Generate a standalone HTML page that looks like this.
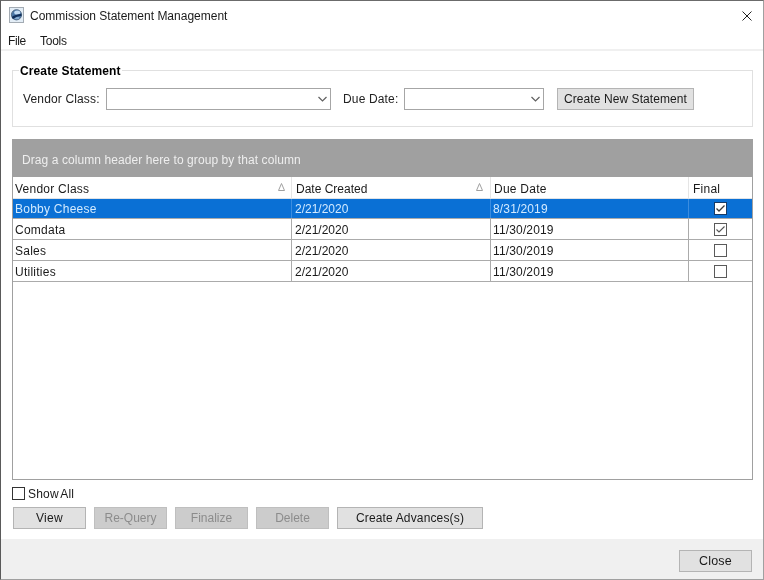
<!DOCTYPE html>
<html><head><meta charset="utf-8">
<style>
html,body{margin:0;padding:0;width:764px;height:580px;overflow:hidden;background:#fff;}
body{position:relative;font-family:"Liberation Sans",sans-serif;font-size:12px;color:#1a1a1a;}
.a{position:absolute;}
.t{position:absolute;white-space:nowrap;line-height:14px;font-size:12px;}
.win{position:absolute;left:0;top:0;width:764px;height:580px;box-sizing:border-box;border-top:1px solid #6b6b6b;border-left:1px solid #5a5a5a;border-right:1px solid #a0a0a0;border-bottom:1px solid #a0a0a0;}
.combo{position:absolute;box-sizing:border-box;border:1px solid #a6a6a6;background:#fff;height:22px;}
.btn{position:absolute;box-sizing:border-box;border:1px solid #b4b4b4;background:#e1e1e1;height:22px;text-align:center;line-height:20px;white-space:nowrap;}
.dis{background:#cccccc;border-color:#bfbfbf;color:#8c8c8c;}
.hl{position:absolute;height:1px;background:#ababab;}
.vl{position:absolute;width:1px;background:#ababab;}
.cb{position:absolute;box-sizing:border-box;width:13px;height:13px;border:1px solid #5a5a5a;background:#fff;}
.t,.btn{will-change:transform;}</style></head><body>
<!-- title bar -->
<svg class="a" style="left:9px;top:7px" width="15" height="16" viewBox="0 0 15 16">
 <rect x="0.5" y="0.5" width="14" height="15" fill="#e3edf6" stroke="#a3abb3"/>
 <circle cx="7.5" cy="7.8" r="5.1" fill="#4d79a8" stroke="#4a617a" stroke-width="0.9"/>
 <ellipse cx="8.2" cy="5.6" rx="3" ry="2" fill="#c2dbf2"/>
 <ellipse cx="8" cy="11" rx="2.6" ry="1.2" fill="#86abd0"/>
 <path d="M2.7 10 Q6 7.2 12.4 6.9 L12.5 8.7 Q8 9 3.8 12 Z" fill="#0f2e5a"/>
</svg>
<div class="t" style="left:30px;top:9px;">Commission Statement Management</div>
<svg class="a" style="left:742px;top:11px" width="10" height="10" viewBox="0 0 10 10">
 <path d="M0.5 0.5 L9.5 9.5 M9.5 0.5 L0.5 9.5" stroke="#222" stroke-width="1"/>
</svg>
<!-- menu -->
<div class="t" style="left:8px;top:34px;letter-spacing:-0.4px">File</div>
<div class="t" style="left:40px;top:34px;letter-spacing:-0.25px">Tools</div>
<div class="a" style="left:1px;top:49px;width:762px;height:2px;background:#f0f0f0"></div>

<!-- group box -->
<div class="a" style="left:12px;top:70px;width:741px;height:57px;box-sizing:border-box;border:1px solid #e0e0e0;"></div>
<div class="t" style="left:19px;top:64px;font-weight:bold;background:#fff;padding:0 1px;color:#000;letter-spacing:0.12px;">Create Statement</div>
<div class="t" style="left:23px;top:92px;color:#222;letter-spacing:0.15px">Vendor Class:</div>
<div class="combo" style="left:106px;top:88px;width:225px;"></div>
<svg class="a" style="left:317px;top:96px" width="11" height="7" viewBox="0 0 11 7"><path d="M1.5 1 L5.5 5 L9.5 1" stroke="#606060" stroke-width="1.2" fill="none"/></svg>
<div class="t" style="left:343px;top:92px;color:#222;letter-spacing:0.15px">Due Date:</div>
<div class="combo" style="left:404px;top:88px;width:140px;"></div>
<svg class="a" style="left:530px;top:96px" width="11" height="7" viewBox="0 0 11 7"><path d="M1.5 1 L5.5 5 L9.5 1" stroke="#606060" stroke-width="1.2" fill="none"/></svg>
<div class="btn" style="left:557px;top:88px;width:137px;letter-spacing:0.08px">Create New Statement</div>

<!-- grid -->
<div class="a" style="left:12px;top:139px;width:741px;height:341px;box-sizing:border-box;border:1px solid #a0a0a0;background:#fff;"></div>
<div class="a" style="left:12px;top:139px;width:741px;height:38px;background:#a0a0a0;"></div>
<div class="t" style="left:22px;top:153px;color:#eeeeee;letter-spacing:0.08px">Drag a column header here to group by that column</div>
<!-- header -->
<div class="t" style="left:15px;top:182px;letter-spacing:0.25px">Vendor Class</div>
<div class="t" style="left:296px;top:182px;">Date Created</div>
<div class="t" style="left:494px;top:182px;letter-spacing:0.25px">Due Date</div>
<div class="t" style="left:693px;top:182px;letter-spacing:0.25px">Final</div>
<div class="a" style="left:291px;top:177px;width:1px;height:21px;background:#e5e5e5"></div>
<div class="a" style="left:490px;top:177px;width:1px;height:21px;background:#e5e5e5"></div>
<div class="a" style="left:688px;top:177px;width:1px;height:21px;background:#e5e5e5"></div>
<svg class="a" style="left:278px;top:183px" width="8" height="9" viewBox="0 0 8 9"><path d="M3.5 0.5 L6.5 7.5 L0.5 7.5 Z" stroke="#a0a0a0" stroke-width="1" fill="none"/></svg>
<svg class="a" style="left:476px;top:183px" width="8" height="9" viewBox="0 0 8 9"><path d="M3.5 0.5 L6.5 7.5 L0.5 7.5 Z" stroke="#a0a0a0" stroke-width="1" fill="none"/></svg>
<div class="a" style="left:13px;top:198px;width:739px;height:1px;background:#dfe3e8"></div>
<!-- rows -->
<div class="a" style="left:13px;top:199px;width:739px;height:19px;background:#0a70d5"></div>
<div class="hl" style="left:13px;top:218px;width:739px;"></div>
<div class="hl" style="left:13px;top:239px;width:739px;"></div>
<div class="hl" style="left:13px;top:260px;width:739px;"></div>
<div class="hl" style="left:13px;top:281px;width:739px;"></div>
<div class="vl" style="left:291px;top:218px;height:64px;"></div>
<div class="vl" style="left:490px;top:218px;height:64px;"></div>
<div class="vl" style="left:688px;top:218px;height:64px;"></div>
<div class="a" style="left:291px;top:199px;width:1px;height:19px;background:#3b8de0"></div>
<div class="a" style="left:490px;top:199px;width:1px;height:19px;background:#3b8de0"></div>
<div class="a" style="left:688px;top:199px;width:1px;height:19px;background:#3b8de0"></div>

<div class="t" style="left:15px;top:202px;color:#d2eaff;letter-spacing:0.25px">Bobby Cheese</div>
<div class="t" style="left:295px;top:202px;color:#d2eaff">2/21/2020</div>
<div class="t" style="left:493px;top:202px;color:#d2eaff;letter-spacing:0.15px">8/31/2019</div>
<div class="cb" style="left:714px;top:202px;border-color:#163a66"></div>

<div class="t" style="left:15px;top:223px;letter-spacing:0.25px">Comdata</div>
<div class="t" style="left:295px;top:223px;">2/21/2020</div>
<div class="t" style="left:493px;top:223px;letter-spacing:0.15px">11/30/2019</div>
<div class="cb" style="left:714px;top:223px;"></div>

<div class="t" style="left:15px;top:244px;letter-spacing:0.25px">Sales</div>
<div class="t" style="left:295px;top:244px;">2/21/2020</div>
<div class="t" style="left:493px;top:244px;letter-spacing:0.15px">11/30/2019</div>
<div class="cb" style="left:714px;top:244px;"></div>

<div class="t" style="left:15px;top:265px;letter-spacing:0.25px">Utilities</div>
<div class="t" style="left:295px;top:265px;">2/21/2020</div>
<div class="t" style="left:493px;top:265px;letter-spacing:0.15px">11/30/2019</div>
<div class="cb" style="left:714px;top:265px;"></div>

<svg class="a" style="left:714px;top:202px" width="13" height="13" viewBox="0 0 13 13"><path d="M2.5 6.5 L5 9 L10.5 3.5" stroke="#3a3a3a" stroke-width="1.3" fill="none"/></svg>
<svg class="a" style="left:714px;top:223px" width="13" height="13" viewBox="0 0 13 13"><path d="M2.5 6.5 L5 9 L10.5 3.5" stroke="#555" stroke-width="1.1" fill="none"/></svg>

<!-- show all -->
<div class="cb" style="left:12px;top:487px;border-color:#333"></div>
<div class="t" style="left:28px;top:487px;word-spacing:-1.5px;letter-spacing:0.2px">Show All</div>

<!-- buttons -->
<div class="btn" style="left:13px;top:507px;width:73px;letter-spacing:0.3px">View</div>
<div class="btn dis" style="left:94px;top:507px;width:73px;">Re-Query</div>
<div class="btn dis" style="left:175px;top:507px;width:73px;">Finalize</div>
<div class="btn dis" style="left:256px;top:507px;width:73px;">Delete</div>
<div class="btn" style="left:337px;top:507px;width:146px;letter-spacing:0.15px">Create Advances(s)</div>

<!-- footer -->
<div class="a" style="left:1px;top:539px;width:762px;height:40px;background:#f0f0f0"></div>
<div class="btn" style="left:679px;top:550px;width:73px;font-size:12.5px;letter-spacing:0.2px;line-height:21px;">Close</div>

<div class="win"></div>
</body></html>
